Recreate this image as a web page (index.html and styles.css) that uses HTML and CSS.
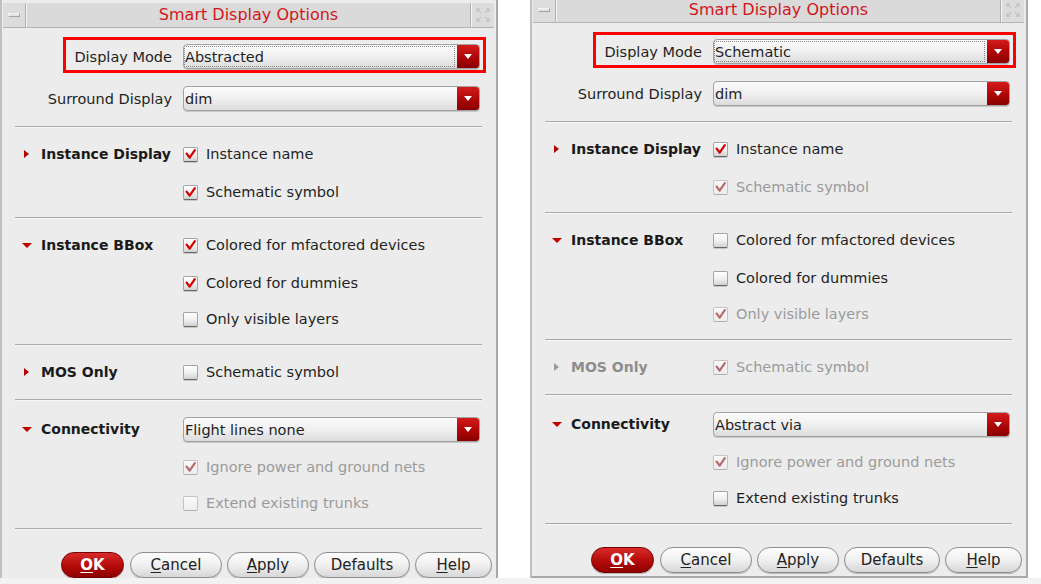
FILE: index.html
```html
<!DOCTYPE html>
<html>
<head>
<meta charset="utf-8">
<link rel="stylesheet" href="styles.css">
</head>
<body>
<div class="page">

  <!-- LEFT DIALOG -->
  <div class="dialog">
    <div class="titlebar">
      <div class="tb-btn tb-min"><span class="min-bar"></span></div>
      <div class="tb-title">Smart Display Options</div>
      <div class="tb-btn tb-close">
        <svg width="14" height="14" viewBox="0 0 14 14"><g fill="none" stroke="#c4c4c4" stroke-width="1.4"><path d="M1 1l4 4M1 13l4-4M13 1l-4 4M13 13l-4-4"/><path d="M1 4V1h3M10 1h3v3M13 10v3h-3M4 13H1v-3"/></g></svg>
      </div>
    </div>
    <div class="content">
      <div class="mode-row hl">
        <div class="mode-lbl">Display Mode</div>
        <div class="combo"><span class="combo-text focus">Abstracted</span><span class="combo-btn"><i></i></span></div>
      </div>
      <div class="mode-row sur">
        <div class="mode-lbl">Surround Display</div>
        <div class="combo"><span class="combo-text">dim</span><span class="combo-btn"><i></i></span></div>
      </div>
      <div class="sep"></div>

      <div class="section s1">
        <div class="row"><div class="head"><span class="tri right"></span><b>Instance Display</b></div><div class="cb"><span class="box on"><svg viewBox="0 0 15 15"><path d="M3 6.5l3.5 4.5 6-8.5"/></svg></span>Instance name</div></div>
        <div class="row"><div class="head"></div><div class="cb"><span class="box on"><svg viewBox="0 0 15 15"><path d="M3 6.5l3.5 4.5 6-8.5"/></svg></span>Schematic symbol</div></div>
      </div>
      <div class="sep"></div>

      <div class="section s3">
        <div class="row"><div class="head"><span class="tri down"></span><b>Instance BBox</b></div><div class="cb"><span class="box on"><svg viewBox="0 0 15 15"><path d="M3 6.5l3.5 4.5 6-8.5"/></svg></span>Colored for mfactored devices</div></div>
        <div class="row"><div class="head"></div><div class="cb"><span class="box on"><svg viewBox="0 0 15 15"><path d="M3 6.5l3.5 4.5 6-8.5"/></svg></span>Colored for dummies</div></div>
        <div class="row last"><div class="head"></div><div class="cb"><span class="box"></span>Only visible layers</div></div>
      </div>
      <div class="sep"></div>

      <div class="section s4">
        <div class="row"><div class="head"><span class="tri right"></span><b>MOS Only</b></div><div class="cb"><span class="box"></span>Schematic symbol</div></div>
      </div>
      <div class="sep"></div>

      <div class="section s5">
        <div class="row"><div class="head"><span class="tri down"></span><b>Connectivity</b></div><div class="combo"><span class="combo-text">Flight lines none</span><span class="combo-btn"><i></i></span></div></div>
        <div class="row"><div class="head"></div><div class="cb dis"><span class="box on"><svg viewBox="0 0 15 15"><path d="M3 6.5l3.5 4.5 6-8.5"/></svg></span>Ignore power and ground nets</div></div>
        <div class="row last"><div class="head"></div><div class="cb dis"><span class="box"></span>Extend existing trunks</div></div>
      </div>
      <div class="sep"></div>

      <div class="buttons">
        <div class="btn ok"><u>O</u>K</div>
        <div class="btn cancel"><u>C</u>ancel</div>
        <div class="btn apply"><u>A</u>pply</div>
        <div class="btn defaults">Defaults</div>
        <div class="btn help"><u>H</u>elp</div>
      </div>
    </div>
  </div>

  <!-- RIGHT DIALOG -->
  <div class="dialog second">
    <div class="titlebar">
      <div class="tb-btn tb-min"><span class="min-bar"></span></div>
      <div class="tb-title">Smart Display Options</div>
      <div class="tb-btn tb-close">
        <svg width="14" height="14" viewBox="0 0 14 14"><g fill="none" stroke="#c4c4c4" stroke-width="1.4"><path d="M1 1l4 4M1 13l4-4M13 1l-4 4M13 13l-4-4"/><path d="M1 4V1h3M10 1h3v3M13 10v3h-3M4 13H1v-3"/></g></svg>
      </div>
    </div>
    <div class="content">
      <div class="mode-row hl">
        <div class="mode-lbl">Display Mode</div>
        <div class="combo"><span class="combo-text focus">Schematic</span><span class="combo-btn"><i></i></span></div>
      </div>
      <div class="mode-row sur">
        <div class="mode-lbl">Surround Display</div>
        <div class="combo"><span class="combo-text">dim</span><span class="combo-btn"><i></i></span></div>
      </div>
      <div class="sep"></div>

      <div class="section s1">
        <div class="row"><div class="head"><span class="tri right"></span><b>Instance Display</b></div><div class="cb"><span class="box on"><svg viewBox="0 0 15 15"><path d="M3 6.5l3.5 4.5 6-8.5"/></svg></span>Instance name</div></div>
        <div class="row"><div class="head"></div><div class="cb dis"><span class="box on"><svg viewBox="0 0 15 15"><path d="M3 6.5l3.5 4.5 6-8.5"/></svg></span>Schematic symbol</div></div>
      </div>
      <div class="sep"></div>

      <div class="section s3">
        <div class="row"><div class="head"><span class="tri down"></span><b>Instance BBox</b></div><div class="cb"><span class="box"></span>Colored for mfactored devices</div></div>
        <div class="row"><div class="head"></div><div class="cb"><span class="box"></span>Colored for dummies</div></div>
        <div class="row last"><div class="head"></div><div class="cb dis"><span class="box on"><svg viewBox="0 0 15 15"><path d="M3 6.5l3.5 4.5 6-8.5"/></svg></span>Only visible layers</div></div>
      </div>
      <div class="sep"></div>

      <div class="section s4">
        <div class="row"><div class="head dis"><span class="tri right"></span><b>MOS Only</b></div><div class="cb dis"><span class="box on"><svg viewBox="0 0 15 15"><path d="M3 6.5l3.5 4.5 6-8.5"/></svg></span>Schematic symbol</div></div>
      </div>
      <div class="sep"></div>

      <div class="section s5">
        <div class="row"><div class="head"><span class="tri down"></span><b>Connectivity</b></div><div class="combo"><span class="combo-text">Abstract via</span><span class="combo-btn"><i></i></span></div></div>
        <div class="row"><div class="head"></div><div class="cb dis"><span class="box on"><svg viewBox="0 0 15 15"><path d="M3 6.5l3.5 4.5 6-8.5"/></svg></span>Ignore power and ground nets</div></div>
        <div class="row last"><div class="head"></div><div class="cb"><span class="box"></span>Extend existing trunks</div></div>
      </div>
      <div class="sep"></div>

      <div class="buttons">
        <div class="btn ok"><u>O</u>K</div>
        <div class="btn cancel"><u>C</u>ancel</div>
        <div class="btn apply"><u>A</u>pply</div>
        <div class="btn defaults">Defaults</div>
        <div class="btn help"><u>H</u>elp</div>
      </div>
    </div>
  </div>

</div>
</body>
</html>
```

FILE: styles.css
```css
* { box-sizing: border-box; }

html, body {
  margin: 0;
  padding: 0;
  background: #ffffff;
}

body {
  font-family: "DejaVu Sans", Verdana, sans-serif;
  font-size: 14.5px;
  color: #1f1f1f;
  width: 1041px;
  height: 584px;
  overflow: hidden;
}

.page {
  display: flex;
  gap: 32px;
  height: 584px;
  border-bottom: 6px solid #f2f2f2;
}

.dialog {
  width: 498px;
  height: 578px;
  flex: none;
  overflow: hidden;
  background: #ececec;
  border-left: 2px solid #c0c0c0;
  border-right: 2px solid #a9a9a9;
}

.dialog.second {
  margin-top: -5px;
  height: 583px;
  border-bottom: 2px solid #a9a9a9;
}

/* ---------- title bar ---------- */
.titlebar {
  margin: 3px 2px 0 1px;
  height: 25px;
  display: flex;
  background: #dadada;
  border-bottom: 1px solid #b4b4b4;
}

.tb-btn {
  width: 23px;
  flex: none;
  display: flex;
  align-items: center;
  justify-content: center;
  background: #dcdcdc;
}

.tb-min { border-right: 1px solid #b0b0b0; box-shadow: 1px 0 0 #f6f6f6; }
.tb-close { border-left: 1px solid #f6f6f6; box-shadow: -1px 0 0 #b0b0b0; }

.min-bar {
  width: 12px;
  height: 4px;
  background: #e4e4e4;
  border: 1px solid #a4a4a4;
  border-top-color: #f4f4f4;
  border-left-color: #f4f4f4;
}

.tb-title {
  flex: 1;
  text-align: center;
  color: #d2161b;
  font-size: 16px;
  line-height: 24px;
}

/* ---------- content ---------- */
.mode-row {
  display: grid;
  grid-template-columns: 117px 297px;
  align-items: center;
  width: 423px;
  margin-left: 61px;
  border: 3px solid transparent;
}

.mode-row.hl {
  margin-top: 9px;
  height: 36px;
  padding-top: 3px;
  border-color: #ff0000;
}

.mode-row.sur {
  margin-top: 10px;
  height: 31px;
}

.mode-lbl {
  display: flex;
  justify-content: flex-end;
  padding-right: 11px;
  white-space: nowrap;
  min-width: 0;
}

.combo {
  height: 25px;
  display: flex;
  border: 1px solid #a2a2a2;
  border-radius: 4px;
  background: linear-gradient(#fbfbfb, #f0f0f0 50%, #dcdcdc);
  box-shadow: 0 1px 0 #c8c8c8;
  overflow: hidden;
}

.combo-text {
  flex: 1;
  line-height: 21px;
  padding-left: 0;
  margin: 1px 2px 1px 0;
  white-space: nowrap;
  border: 1px solid transparent;
}

.combo-text.focus {
  border: 1px dotted #888;
}

.combo-btn {
  width: 22px;
  flex: none;
  background: linear-gradient(#d51a1a, #a80606 60%, #8a0000);
  display: flex;
  align-items: center;
  justify-content: center;
}

.combo-btn i {
  width: 0;
  height: 0;
  border-left: 4px solid transparent;
  border-right: 4px solid transparent;
  border-top: 5px solid #ffffff;
}

.sep {
  margin: 0 14px 0 13px;
  height: 2px;
  border-top: 1px solid #a9a9a9;
  border-bottom: 1px solid #f8f8f8;
}

.mode-row.sur + .sep { margin-top: 12px; }

.section { display: flex; flex-direction: column; }
.s1 { padding: 7px 0 6px; }
.s3 { padding: 7px 0 8px; }
.s4 { padding: 7px 0 8px; }
.s5 { padding: 9px 0 8px; }

.row {
  height: 38px;
  display: grid;
  grid-template-columns: 181px 297px;
  align-items: center;
}

.row.last { height: 34px; }

.head {
  display: flex;
  align-items: center;
  padding-left: 20px;
  gap: 9px;
  font-size: 14px;
  white-space: nowrap;
}

.head b { font-weight: bold; color: #1a1a1a; }
.head.dis b { color: #8d8d8d; }

.tri {
  width: 10px;
  height: 10px;
  flex: none;
  position: relative;
}

.tri::after {
  content: "";
  position: absolute;
  width: 0;
  height: 0;
}

.tri.right::after {
  left: 2px;
  top: 1px;
  border-top: 4px solid transparent;
  border-bottom: 4px solid transparent;
  border-left: 5px solid #b80000;
}

.tri.down::after {
  left: 0;
  top: 3px;
  border-left: 5px solid transparent;
  border-right: 5px solid transparent;
  border-top: 5px solid #c00000;
}

.head.dis .tri.right::after { border-left-color: #9a9a9a; }

.cb {
  display: flex;
  align-items: center;
  gap: 8px;
  white-space: nowrap;
}

.cb.dis { color: #9b9b9b; }

.box {
  width: 15px;
  height: 15px;
  flex: none;
  border: 1px solid #a4a4a4;
  border-bottom-color: #666;
  border-radius: 2px;
  background: linear-gradient(#ffffff, #f1f1f1 50%, #d2d2d2);
  box-shadow: 0 1px 0 #c6c6c6;
  display: flex;
}

.box svg { width: 13px; height: 13px; overflow: visible; }
.box svg path {
  fill: none;
  stroke: #d30000;
  stroke-width: 2.6;
  stroke-linecap: round;
  stroke-linejoin: round;
}

.cb.dis .box { border-color: #c4c4c4; border-bottom-color: #b0b0b0; box-shadow: none; background: linear-gradient(#fafafa, #ededed); }
.cb.dis .box svg path { stroke: #b86b6b; }

/* ---------- buttons ---------- */
.buttons {
  display: flex;
  margin-top: 22px;
  padding-left: 59px;
  gap: 5px;
}

.btn {
  height: 26px;
  border-radius: 13px;
  border: 1px solid #8e8e8e;
  background: linear-gradient(#fdfdfd, #f0f0f0 50%, #d7d7d7);
  box-shadow: 0 1px 0 #b8b8b8;
  text-align: center;
  line-height: 24px;
  font-size: 15px;
  color: #222;
  flex: none;
}

.btn u { text-decoration: underline; text-underline-offset: 2px; }

.btn.ok {
  width: 63px;
  margin-right: 1px;
  background: linear-gradient(#d92a2a, #b30a0a 55%, #8e0000);
  border-color: #7a0000;
  color: #ffffff;
  font-weight: bold;
}
.btn.cancel { width: 92px; }
.btn.apply { width: 82px; }
.btn.defaults { width: 96px; }
.btn.help { width: 77px; }
```
